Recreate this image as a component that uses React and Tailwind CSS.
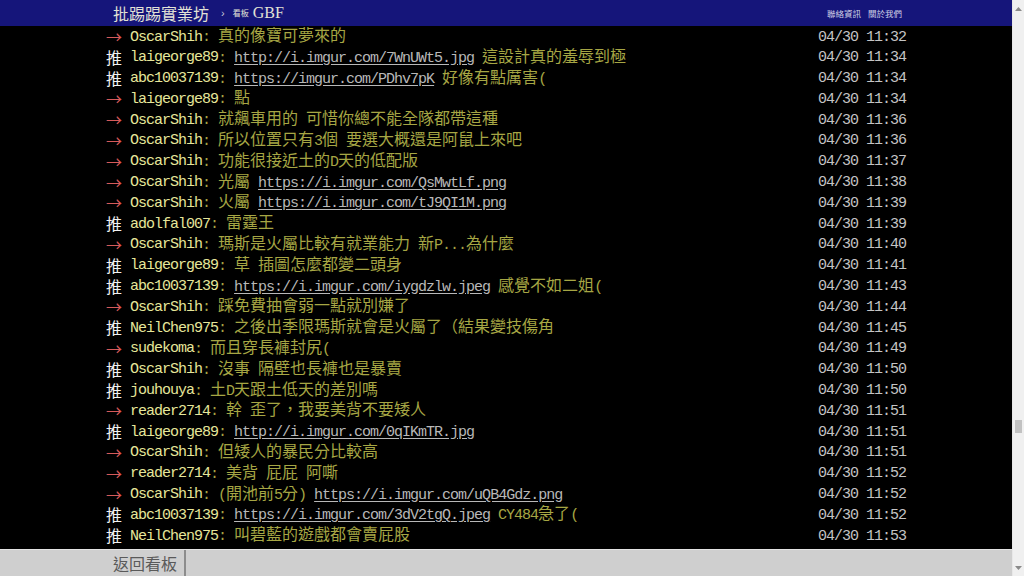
import React from 'react';

const rows = [
  { tag: '→', user: 'OscarShih', text: [': 真的像寶可夢來的'], time: '04/30 11:32' },
  { tag: '推', user: 'laigeorge89', text: [': ', { url: 'http://i.imgur.com/7WnUWt5.jpg' }, ' 這設計真的羞辱到極'], time: '04/30 11:34' },
  { tag: '推', user: 'abc10037139', text: [': ', { url: 'https://imgur.com/PDhv7pK' }, ' 好像有點厲害('], time: '04/30 11:34' },
  { tag: '→', user: 'laigeorge89', text: [': 點'], time: '04/30 11:34' },
  { tag: '→', user: 'OscarShih', text: [': 就飆車用的 可惜你總不能全隊都帶這種'], time: '04/30 11:36' },
  { tag: '→', user: 'OscarShih', text: [': 所以位置只有3個 要選大概還是阿鼠上來吧'], time: '04/30 11:36' },
  { tag: '→', user: 'OscarShih', text: [': 功能很接近土的D天的低配版'], time: '04/30 11:37' },
  { tag: '→', user: 'OscarShih', text: [': 光屬 ', { url: 'https://i.imgur.com/QsMwtLf.png' }], time: '04/30 11:38' },
  { tag: '→', user: 'OscarShih', text: [': 火屬 ', { url: 'https://i.imgur.com/tJ9QI1M.png' }], time: '04/30 11:39' },
  { tag: '推', user: 'adolfal007', text: [': 雷霆王'], time: '04/30 11:39' },
  { tag: '→', user: 'OscarShih', text: [': 瑪斯是火屬比較有就業能力 新P...為什麼'], time: '04/30 11:40' },
  { tag: '推', user: 'laigeorge89', text: [': 草 插圖怎麼都變二頭身'], time: '04/30 11:41' },
  { tag: '推', user: 'abc10037139', text: [': ', { url: 'https://i.imgur.com/iygdzlw.jpeg' }, ' 感覺不如二姐('], time: '04/30 11:43' },
  { tag: '→', user: 'OscarShih', text: [': 踩免費抽會弱一點就別嫌了'], time: '04/30 11:44' },
  { tag: '推', user: 'NeilChen975', text: [': 之後出季限瑪斯就會是火屬了（結果變技傷角'], time: '04/30 11:45' },
  { tag: '→', user: 'sudekoma', text: [': 而且穿長褲封尻('], time: '04/30 11:49' },
  { tag: '推', user: 'OscarShih', text: [': 沒事 隔壁也長褲也是暴賣'], time: '04/30 11:50' },
  { tag: '推', user: 'jouhouya', text: [': 土D天跟土低天的差別嗎'], time: '04/30 11:50' },
  { tag: '→', user: 'reader2714', text: [': 幹 歪了，我要美背不要矮人'], time: '04/30 11:51' },
  { tag: '推', user: 'laigeorge89', text: [': ', { url: 'http://i.imgur.com/0qIKmTR.jpg' }], time: '04/30 11:51' },
  { tag: '→', user: 'OscarShih', text: [': 但矮人的暴民分比較高'], time: '04/30 11:51' },
  { tag: '→', user: 'reader2714', text: [': 美背 屁屁 阿嘶'], time: '04/30 11:52' },
  { tag: '→', user: 'OscarShih', text: [': (開池前5分) ', { url: 'https://i.imgur.com/uQB4Gdz.png' }], time: '04/30 11:52' },
  { tag: '推', user: 'abc10037139', text: [': ', { url: 'https://i.imgur.com/3dV2tgQ.jpeg' }, ' CY484急了('], time: '04/30 11:52' },
  { tag: '推', user: 'NeilChen975', text: [': 叫碧藍的遊戲都會賣屁股'], time: '04/30 11:53' },
];

// ascii runs get the half-width mono face, the rest the cjk face
function Mixed({ text }) {
  return text.split(/([\x20-\x7e]+)/).map((p, i) => {
    if (!p) return null;
    if (/^[\x20-\x7e]+$/.test(p)) {
      return (
        <span key={i} className="font-['Liberation_Mono',monospace] text-[15px] tracking-[-1px] whitespace-pre">
          {p}
        </span>
      );
    }
    return (
      <span key={i} className="font-['Noto_Sans_CJK_TC',sans-serif] text-[16px] whitespace-pre">
        {p}
      </span>
    );
  });
}

function PushRow({ row }) {
  return (
    <div className="flex h-[20.8px] items-center justify-between leading-[20.8px] whitespace-nowrap">
      <div className="flex items-center">
        <span className={`inline-block w-[24px] font-['Noto_Sans_CJK_TC',sans-serif] text-[16px] ${row.tag === '推' ? 'text-[#f2f2f2]' : 'text-[#d65a5a]'}`}>
          {row.tag}
        </span>
        <span className="text-[#e6e69a]">
          <Mixed text={row.user} />
        </span>
        <span className="text-[#a6a644]">
          {row.text.map((t, i) =>
            typeof t === 'string' ? (
              <Mixed key={i} text={t} />
            ) : (
              <span key={i} className="text-[#b8b8b8] underline underline-offset-2">
                <Mixed text={t.url} />
              </span>
            )
          )}
        </span>
      </div>
      <span className="text-[#c4c4c4]">
        <Mixed text={row.time} />
      </span>
    </div>
  );
}

export default function App() {
  return (
    <div className="flex h-[576px] w-[1024px] overflow-hidden bg-black">
      <div className="flex min-w-0 flex-1 flex-col">
        {/* top bar */}
        <header className="h-[26px] shrink-0 bg-[#15157a]">
          <div className="mx-auto flex h-full w-[800px] items-center justify-between">
            <div className="flex items-center pl-[7px]">
              <span className="font-['Noto_Sans_CJK_TC',sans-serif] text-[16px] leading-[20px] text-[#e2e2d6]">批踢踢實業坊</span>
              <span className="ml-[12px] font-['Liberation_Sans',sans-serif] text-[11px] leading-[14px] text-[#c8c8d8]">›</span>
              <span className="ml-[8px] font-['Noto_Sans_CJK_TC',sans-serif] text-[8px] leading-[12px] text-[#e2e2d6]">看板</span>
              <span className="ml-[4px] font-['Liberation_Serif',serif] text-[16px] leading-[20px] text-[#e2e2d6]">GBF</span>
            </div>
            <div className="flex items-center gap-[7px] pr-[4px] font-['Noto_Sans_CJK_TC',sans-serif] text-[8.5px] leading-[12px] text-[#d0d0e6]">
              <span>聯絡資訊</span>
              <span>關於我們</span>
            </div>
          </div>
        </header>

        {/* pushes */}
        <main className="min-h-0 flex-1 overflow-hidden">
          <div className="mx-auto w-[800px]">
            {rows.map((r, i) => (
              <PushRow key={i} row={r} />
            ))}
          </div>
        </main>

        {/* bottom bar */}
        <footer className="h-[27px] shrink-0 border-t border-[#e4e4e4] bg-[#cfcfcf]">
          <div className="mx-auto flex h-full w-[800px]">
            <div className="flex h-full items-center border-r-2 border-[#8c8c8c] px-[7px] font-['Noto_Sans_CJK_TC',sans-serif] text-[16px] leading-[20px] text-[#5a5a5a]">
              返回看板
            </div>
          </div>
        </footer>
      </div>

      {/* scrollbar */}
      <div className="flex w-[12px] shrink-0 flex-col border-l border-[#e8e8e8] bg-[#f0f0f0]">
        <div className="flex h-[17px] items-center justify-center">
          <svg width="7" height="4" viewBox="0 0 7 4">
            <path d="M0 4 L3.5 0 L7 4 Z" fill="#8a8a8a" />
          </svg>
        </div>
        <div className="h-[403px]" />
        <div className="mx-[2px] h-[13px] bg-[#c2c2c2]" />
        <div className="flex-1" />
        <div className="flex h-[17px] items-center justify-center">
          <svg width="7" height="4" viewBox="0 0 7 4">
            <path d="M0 0 L7 0 L3.5 4 Z" fill="#8a8a8a" />
          </svg>
        </div>
      </div>
    </div>
  );
}
